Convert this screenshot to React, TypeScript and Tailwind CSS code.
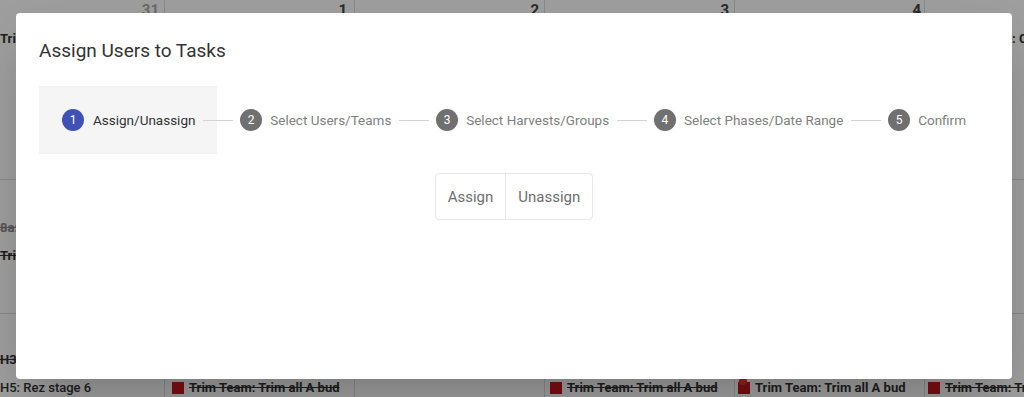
import React from 'react';

type Ev = { text: string; strike?: boolean; muted?: boolean; square?: boolean; badge?: boolean; medium?: boolean };

const steps = ['Assign/Unassign', 'Select Users/Teams', 'Select Harvests/Groups', 'Select Phases/Date Range', 'Confirm'];

const columns: { width: string; pad: string; day: string; dim?: boolean; rows: Ev[][] }[] = [
  {
    width: 'w-[165px]',
    pad: 'pl-0 pr-[5px]',
    day: '31',
    dim: true,
    rows: [
      [{ text: 'Trim Team: Clone A' }],
      [{ text: '8a: Veg room 2', strike: true, muted: true }, { text: 'Trim Team: Veg', strike: true }],
      [{ text: 'H3: Flip to flower', strike: true }, { text: 'H5: Rez stage 6', medium: true }],
    ],
  },
  {
    width: 'w-[190px]',
    pad: 'px-[7px]',
    day: '1',
    rows: [
      [{ text: 'Trim Team: Clone A' }],
      [{ text: 'H4: Feed room 3', muted: true }],
      [{ text: 'H3: Flip to flower', strike: true }, { text: 'Trim Team: Trim all A bud', strike: true, square: true }],
    ],
  },
  {
    width: 'w-[190px]',
    pad: 'px-[5px]',
    day: '2',
    rows: [[{ text: 'Trim Team: Clone B' }], [], [{ text: 'H2: Defoliate' }]],
  },
  {
    width: 'w-[190px]',
    pad: 'px-[5px]',
    day: '3',
    rows: [
      [{ text: 'Trim Team: Clone B' }],
      [],
      [{ text: 'H2: Defoliate' }, { text: 'Trim Team: Trim all A bud', strike: true, square: true }],
    ],
  },
  {
    width: 'w-[190px]',
    pad: 'px-[3px]',
    day: '4',
    rows: [
      [{ text: 'Trim Team: Clone C' }],
      [],
      [{ text: 'H2: Defoliate' }, { text: 'Trim Team: Trim all A bud', square: true, badge: true }],
    ],
  },
  {
    width: 'w-[190px]',
    pad: 'px-[3px]',
    day: '',
    rows: [
      [{ text: 'Harvest phase: C' }, { text: 'Clone phase d' }, { text: 'Trim Team', strike: true }],
      [{ text: 'H6: stage 3)' }, { text: 'Trim Team', strike: true }],
      [{ text: 'Clone phase d' }, { text: 'Trim Team: Trim', strike: true, square: true }],
    ],
  },
];

const EventLine: React.FC<{ ev: Ev }> = ({ ev }) => (
  <div className="flex h-[28px] shrink-0 items-center gap-[5px] whitespace-nowrap">
    {ev.square && (
      <span className="relative h-[12px] w-[12px] shrink-0 bg-[#c8161d]">
        {ev.badge && <span className="absolute -top-[5px] left-[1px] h-[8px] w-[8px] rounded-full bg-[#e53935]" />}
      </span>
    )}
    <span
      className={`text-[13px] ${ev.medium ? 'font-medium' : 'font-bold'} ${ev.strike ? 'line-through' : ''} ${
        ev.muted ? 'text-[#8a8a8a]' : 'text-[#333]'
      }`}
    >
      {ev.text}
    </span>
  </div>
);

const Calendar: React.FC = () => (
  <div className="flex h-full">
    {columns.map((col, i) => (
      <div key={i} className={`${col.width} flex shrink-0 flex-col border-r border-[#ddd]`}>
        <div className={`flex h-[180px] shrink-0 flex-col border-b border-[#ddd] ${col.pad}`}>
          <div className={`h-[20px] text-right text-[15px] font-bold leading-[20px] ${col.dim ? 'text-[#aaa]' : 'text-[#444]'}`}>
            {col.day}
          </div>
          <div className="mt-[5px] flex flex-col">
            {col.rows[0].map((ev, j) => (
              <EventLine key={j} ev={ev} />
            ))}
          </div>
        </div>
        <div className={`flex h-[134px] shrink-0 flex-col border-b border-[#ddd] pt-[34px] ${col.pad}`}>
          {col.rows[1].map((ev, j) => (
            <EventLine key={j} ev={ev} />
          ))}
        </div>
        <div className={`flex shrink-0 flex-col pt-[32px] ${col.pad}`}>
          {col.rows[2].map((ev, j) => (
            <EventLine key={j} ev={ev} />
          ))}
        </div>
      </div>
    ))}
  </div>
);

const StepIcon: React.FC<{ n: number; active?: boolean }> = ({ n, active }) => (
  <span
    className={`flex h-[22px] w-[22px] shrink-0 items-center justify-center rounded-full text-[12px] text-white ${
      active ? 'bg-[#3f51b5]' : 'bg-[#707070]'
    }`}
  >
    {n}
  </span>
);

export default function App() {
  return (
    <div className="relative h-[397px] w-[1024px] overflow-hidden bg-white font-['Roboto','Liberation_Sans',sans-serif]">
      <Calendar />
      <div className="absolute inset-0 bg-black/[0.38]" />

      <div className="absolute left-[16px] top-[13px] flex h-[366px] w-[996px] flex-col rounded-[4px] bg-white px-[23px] pt-[24px] shadow-2xl">
        <h2 className="h-[28px] text-[19px] leading-[28px] text-[#333]">Assign Users to Tasks</h2>

        <div className="mt-[21px] flex h-[68px] items-center pr-[23px]">
          {steps.map((label, i) => (
            <React.Fragment key={label}>
              {i === 0 ? (
                <div className="flex h-full items-center gap-[9px] bg-[#f5f5f5] pl-[23px] pr-[22px]">
                  <StepIcon n={1} active />
                  <span className="whitespace-nowrap text-[13.5px] text-[#333]">{label}</span>
                </div>
              ) : (
                <div className="flex items-center gap-[8px]">
                  <StepIcon n={i + 1} />
                  <span className="whitespace-nowrap text-[13.5px] text-[#808080]">{label}</span>
                </div>
              )}
              {i < steps.length - 1 && (
                <div
                  className={`relative h-px flex-1 bg-[#d4d4d4] ${i === 0 ? 'ml-[-14px]' : 'ml-[8px]'} mr-[7px]`}
                />
              )}
            </React.Fragment>
          ))}
        </div>

        <div className="mt-[19px] flex justify-center">
          <div className="flex h-[47px] divide-x divide-[#e8e8e8] rounded-[4px] border border-[#e8e8e8]">
            <button className="px-[12px] pt-[2px] text-[15px] text-[#6e6e6e]">Assign</button>
            <button className="px-[12px] pt-[2px] text-[15px] text-[#6e6e6e]">Unassign</button>
          </div>
        </div>
      </div>
    </div>
  );
}
